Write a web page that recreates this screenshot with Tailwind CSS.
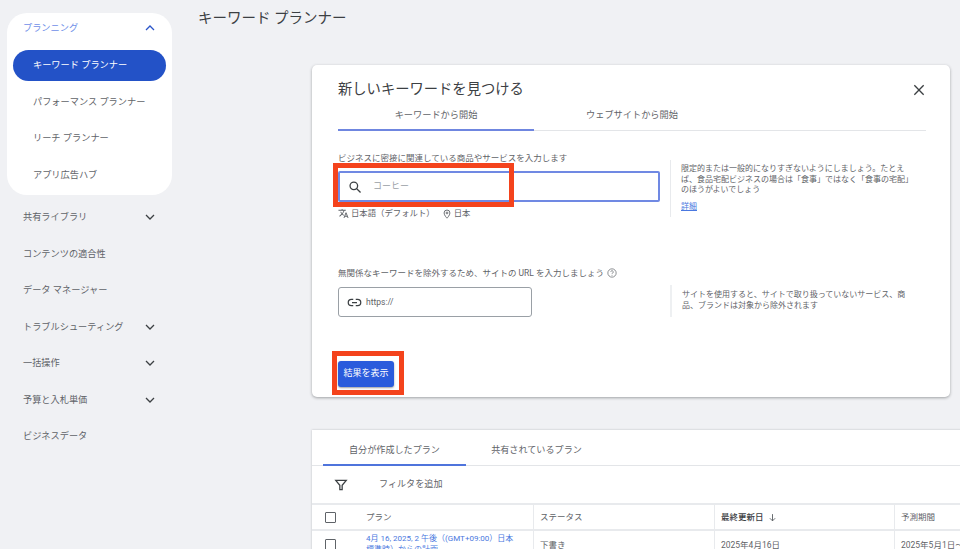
<!DOCTYPE html>
<html lang="ja">
<head>
    <meta charset="UTF-8">
    <title>キーワード プランナー</title>
    <script src="https://cdn.jsdelivr.net/npm/@tailwindcss/browser@4"></script>
</head>
<body class="bg-[#f0f1f4] w-[960px] h-[549px] overflow-hidden font-['Roboto','Noto_Sans_CJK_JP',sans-serif] text-[#5f6368]">
<div class="relative flex w-[960px] h-[549px] overflow-hidden">

    <!-- sidebar -->
    <aside class="w-[172px] shrink-0 pl-[7px] pt-[13px] text-[9.2px]">
        <div class="w-[165px] h-[182px] bg-white rounded-[20px] pt-[6px] px-[6px]">
            <div class="h-[18px] flex items-center justify-between pl-[10px] pr-[10px] text-[#6f8fe8]">
                <span>プランニング</span>
                <svg class="w-[12px] h-[12px]" viewBox="0 0 24 24" fill="none" stroke="#2b55c9" stroke-width="2.6"><path d="M4 16l8-8 8 8"/></svg>
            </div>
            <div class="h-[31px] mt-[12.500px] flex items-center pl-[20px] bg-[#2352c7] rounded-full text-white">キーワード プランナー</div>
            <div class="h-[36.5px] mt-[3px] flex items-center pl-[20px]">パフォーマンス プランナー</div>
            <div class="h-[36.5px] flex items-center pl-[20px]">リーチ プランナー</div>
            <div class="h-[36.5px] flex items-center pl-[20px]">アプリ広告ハブ</div>
        </div>
        <div class="mt-[4px] pl-[16px] pr-[16px] w-[165px]">
            <div class="h-[36.5px] flex items-center justify-between"><span>共有ライブラリ</span><svg class="w-[12px] h-[12px]" viewBox="0 0 24 24" fill="none" stroke="#3c4043" stroke-width="2.6"><path d="M4 8l8 8 8-8"/></svg></div>
            <div class="h-[36.5px] flex items-center">コンテンツの適合性</div>
            <div class="h-[36.5px] flex items-center">データ マネージャー</div>
            <div class="h-[36.5px] flex items-center justify-between"><span>トラブルシューティング</span><svg class="w-[12px] h-[12px]" viewBox="0 0 24 24" fill="none" stroke="#3c4043" stroke-width="2.6"><path d="M4 8l8 8 8-8"/></svg></div>
            <div class="h-[36.5px] flex items-center justify-between"><span>一括操作</span><svg class="w-[12px] h-[12px]" viewBox="0 0 24 24" fill="none" stroke="#3c4043" stroke-width="2.6"><path d="M4 8l8 8 8-8"/></svg></div>
            <div class="h-[36.5px] flex items-center justify-between"><span>予算と入札単価</span><svg class="w-[12px] h-[12px]" viewBox="0 0 24 24" fill="none" stroke="#3c4043" stroke-width="2.6"><path d="M4 8l8 8 8-8"/></svg></div>
            <div class="h-[36.5px] flex items-center">ビジネスデータ</div>
        </div>
    </aside>

    <!-- main -->
    <main class="flex-1 min-w-0">
        <h1 class="h-[65px] pl-[26px] pt-[8px] text-[14.5px] leading-[22px] font-normal text-[#3c4043]">キーワード プランナー</h1>

        <section class="relative ml-[140px] w-[638px] h-[332px] bg-white rounded-[5px] shadow-[0_1px_3px_rgba(60,64,67,0.45)] pl-[26px] pr-[24px]">
            <div class="flex items-center justify-between h-[38px] pt-[12px]">
                <h2 class="text-[14.3px] font-normal text-[#3c4043]">新しいキーワードを見つける</h2>
                <svg class="w-[16px] h-[16px] -mr-[1px]" viewBox="0 0 24 24" fill="none" stroke="#3c4043" stroke-width="2"><path d="M5 5l14 14M19 5L5 19"/></svg>
            </div>
            <div class="flex h-[28px] border-b border-[#e3e5e8] text-[9.2px]">
                <div class="w-[196px] h-[28px] flex items-start justify-center pt-[5px] border-b-2 border-[#6f86e0]">キーワードから開始</div>
                <div class="w-[196px] flex items-start justify-center pt-[5px]">ウェブサイトから開始</div>
            </div>

            <div class="flex mt-[21px]">
                <div class="w-[322px] shrink-0">
                    <p class="text-[8.5px] leading-[13px]">ビジネスに密接に関連している商品やサービスを入力します</p>
                    <div class="mt-[6px] h-[31px] flex items-center border-2 border-[#7089e3] rounded-[2px] pl-[8px]">
                        <svg class="w-[14px] h-[14px]" viewBox="0 0 24 24" fill="none" stroke="#3c4043" stroke-width="2.2"><circle cx="10" cy="10" r="6.5"/><path d="M15 15l6.5 6.5"/></svg>
                        <span class="ml-[11px] text-[9px] text-[#9aa0a6]">コーヒー</span>
                    </div>
                    <div class="mt-[5px] flex items-center text-[8.4px] leading-[13px]">
                        <svg class="w-[11px] h-[11px]" viewBox="0 0 24 24" fill="#5f6368"><path d="M12.9 15.1l-2.6-2.5c1.8-2 3-4.2 3.8-6.6H17V4h-7V2H8v2H1v2h11.2c-.7 1.900-1.800 3.800-3.200 5.300-.9-1-1.700-2.100-2.300-3.300h-2c.7 1.600 1.700 3.200 3 4.600l-5.100 5L4 19l5-5 3.100 3.100.8-2zM18.500 10h-2L12 22h2l1.100-3h4.800l1.100 3h2l-4.500-12zm-2.600 7l1.600-4.300 1.600 4.300h-3.200z"/></svg>
                        <span class="ml-[2px]">日本語（デフォルト）</span>
                        <svg class="ml-[7px] w-[10px] h-[10px]" viewBox="0 0 24 24" fill="none" stroke="#5f6368" stroke-width="2.2"><path d="M12 22s-7-7-7-12.500a7 7 0 0 1 14 0C19 15 12 22 12 22z"/><circle cx="12" cy="9.500" r="2.200"/></svg>
                        <span class="ml-[2px]">日本</span>
                    </div>
                </div>
                <div class="ml-[10px] mt-[8px] h-[57px] border-l border-[#e8eaed] pl-[10px] w-[244px] text-[8px] leading-[10.5px]">
                    <p class="mt-[4px] w-[231px]">限定的または一般的になりすぎないようにしましょう。たとえば、食品宅配ビジネスの場合は「食事」ではなく「食事の宅配」のほうがよいでしょう</p>
                    <a class="block mt-[6px] text-[#4a78e0] underline">詳細</a>
                </div>
            </div>

            <div class="flex mt-[47px]">
                <div class="w-[322px] shrink-0">
                    <p class="flex items-center text-[8.5px] leading-[13px]">無関係なキーワードを除外するため、サイトの URL を入力しましょう
                        <svg class="ml-[3px] -mt-[2px] w-[10px] h-[10px]" viewBox="0 0 24 24" fill="none" stroke="#5f6368" stroke-width="1.700"><circle cx="12" cy="12" r="10"/><path d="M9 9.500a3 3 0 1 1 4.500 2.600c-1 .6-1.500 1.200-1.500 2.400M12 16.500v2"/></svg>
                    </p>
                    <div class="mt-[7px] w-[194px] h-[30px] flex items-center border border-[#9aa0a6] rounded-[3px] pl-[8px] text-[8.5px]">
                        <svg class="w-[15px] h-[15px]" viewBox="0 0 24 24" fill="none" stroke="#3c4043" stroke-width="2"><path d="M10 7H7a5 5 0 0 0 0 10h3M14 7h3a5 5 0 0 1 0 10h-3M8 12h8"/></svg>
                        <span class="ml-[4px]">https://</span>
                    </div>
                </div>
                <div class="ml-[10px] mt-[18px] h-[32px] border-l-2 border-[#eef0f2] pl-[10px] w-[244px] text-[8px] leading-[10.5px]">
                    <p class="mt-[5px] w-[231px]">サイトを使用すると、サイトで取り扱っていないサービス、商品、ブランドは対象から除外されます</p>
                </div>
            </div>

            <button class="mt-[44px] w-[56px] h-[26px] bg-[#2a5bdc] rounded-[3px] text-white text-[9px] shadow-[0_1px_2px_rgba(60,64,67,0.5)]">結果を表示</button>
        </section>

        <section class="ml-[140px] mt-[33px] w-[700px] h-[140px] bg-white shadow-[0_0_2px_rgba(60,64,67,0.3)] text-[9.100px]">
            <div class="flex h-[36px] border-b border-[#e3e5e8] pl-[11px]">
                <div class="w-[143px] h-[36px] flex items-center justify-center pt-[7px] border-b-2 border-[#4f74dc] text-[#5f6368]">自分が作成したプラン</div>
                <div class="w-[141px] flex items-center justify-center pt-[7px]">共有されているプラン</div>
            </div>
            <div class="flex items-center h-[37px] pl-[22px]">
                <svg class="w-[14px] h-[14px]" viewBox="0 0 24 24" fill="none" stroke="#3c4043" stroke-width="2.200"><path d="M3 4h18l-7 8.500V20h-4v-7.500L3 4z"/></svg>
                <span class="ml-[31px]">フィルタを追加</span>
            </div>
            <div class="flex h-[28px] border-y-2 border-[#e8eaed] text-[8.500px]">
                <div class="w-[222px] flex items-center pl-[13px] border-r border-[#e8eaed]">
                    <span class="w-[11px] h-[11px] border-[1.500px] border-[#5f6368] rounded-[1px]"></span>
                    <span class="ml-[30px]">プラン</span>
                </div>
                <div class="w-[181px] flex items-center pl-[6px] border-r border-[#e8eaed]">ステータス</div>
                <div class="w-[180px] flex items-center pl-[6px] border-r border-[#e8eaed] font-medium text-[#3c4043]">最終更新日
                    <svg class="ml-[4px] w-[9px] h-[9px]" viewBox="0 0 24 24" fill="none" stroke="#5f6368" stroke-width="2.500"><path d="M12 3v18M5 14l7 7 7-7"/></svg>
                </div>
                <div class="flex-1 flex items-center pl-[6px]">予測期間</div>
            </div>
            <div class="flex h-[40px] text-[8.500px]">
                <div class="w-[222px] flex items-start pl-[13px] pt-[2px] border-r border-[#e8eaed]">
                    <span class="w-[11px] h-[11px] mt-[6px] shrink-0 border-[1.500px] border-[#5f6368] rounded-[1px]"></span>
                    <a class="ml-[30px] w-[150px] text-[8px] leading-[11px] text-[#4a78e0]">4月 16, 2025, 2 午後（(GMT+09:00）日本標準時）からの計画</a>
                </div>
                <div class="w-[181px] pl-[6px] pt-[8px] border-r border-[#e8eaed]">下書き</div>
                <div class="w-[180px] pl-[6px] pt-[8px] border-r border-[#e8eaed]">2025年4月16日</div>
                <div class="flex-1 pl-[6px] pt-[8px] whitespace-nowrap">2025年5月1日～3</div>
            </div>
        </section>
    </main>

    <!-- orange annotation boxes -->
    <div class="absolute left-[333px] top-[163px] w-[181px] h-[44px] border-[5px] border-[#f4431c]"></div>
    <div class="absolute left-[332px] top-[351px] w-[72px] h-[44px] border-[5px] border-[#f4431c]"></div>
</div>
</body>
</html>
